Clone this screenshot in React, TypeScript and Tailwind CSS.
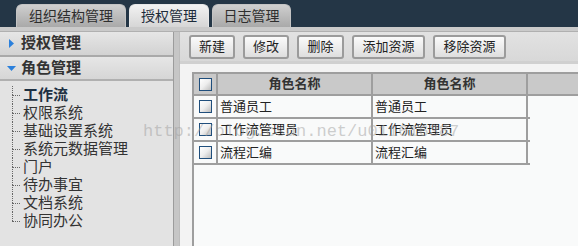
const tree = ["工作流", "权限系统", "基础设置系统", "系统元数据管理", "门户", "待办事宜", "文档系统", "协同办公"];
const buttons = [
  { label: "新建", w: "w-[46px]" },
  { label: "修改", w: "w-[46px]" },
  { label: "删除", w: "w-[47px]" },
  { label: "添加资源", w: "w-[73px]" },
  { label: "移除资源", w: "w-[73px]" },
];
const rows = [
  ["普通员工", "普通员工"],
  ["工作流管理员", "工作流管理员"],
  ["流程汇编", "流程汇编"],
];

function Check() {
  return (
    <span className="block w-[13px] h-[13px] border border-[#1f4e7c] bg-gradient-to-br from-white via-[#eeeeee] to-[#bdbdbd]" />
  );
}

function Tab(props: { label: string; active?: boolean; w: string }) {
  return (
    <div
      className={
        props.w +
        " h-[23px] rounded-t-[6px] flex items-center justify-center text-[14px] border border-b-0 " +
        (props.active
          ? "bg-gradient-to-b from-[#f2f2f2] to-[#d6d6d6] border-[#e8e8e8] text-[#1c2b3a]"
          : "bg-gradient-to-b from-[#cfcfcf] to-[#a9a9a9] border-[#c4c4c4] text-[#2e2e2e]")
      }
    >
      {props.label}
    </div>
  );
}

export default function App() {
  return (
    <div className="w-[578px] h-[246px] overflow-hidden relative bg-[#e4e4e4] font-['Liberation_Sans','Noto_Sans_CJK_SC',sans-serif] text-[#333]">
      {/* tabs bar */}
      <div className="h-[27px] bg-[#243646] flex items-end pl-[16px] gap-[3px]">
        <Tab label="组织结构管理" w="w-[110px]" />
        <Tab label="授权管理" w="w-[80px]" active />
        <Tab label="日志管理" w="w-[79px]" />
      </div>
      <div className="h-[5px] bg-[#cacaca] border-b border-[#b0b0b0]" />

      <div className="flex h-[214px]">
        {/* left menu */}
        <div className="w-[174px] bg-[#e3e3e3] border-r border-[#9c9c9c] flex flex-col">
          <div className="h-[25px] flex items-center gap-[7px] pl-[9px] bg-gradient-to-b from-[#e6e6e6] to-[#d2d2d2] border-b-2 border-[#a9a9a9]">
            <svg width="5" height="9" viewBox="0 0 5 9">
              <path d="M0 0 L5 4.5 L0 9 Z" fill="#2b80dc" />
            </svg>
            <span className="text-[15px] font-bold text-[#333]">授权管理</span>
          </div>
          <div className="h-[24px] flex items-center gap-[5px] pl-[7px] bg-gradient-to-b from-[#e6e6e6] to-[#d6d6d6] border-b-2 border-[#b0b0b0]">
            <svg width="9" height="5" viewBox="0 0 9 5">
              <path d="M0 0 L9 0 L4.5 5 Z" fill="#2b80dc" />
            </svg>
            <span className="text-[15px] font-bold text-[#333]">角色管理</span>
          </div>
          <div className="pl-[12px] pt-[5px] flex flex-col">
            {tree.map((t, i) => (
              <div key={t} className="flex h-[18px]">
                <div className="w-[8px] flex flex-col">
                  <div className="flex-1 border-l border-dotted border-[#666]" />
                  <div
                    className={
                      "flex-1 border-t border-dotted border-[#666] " +
                      (i < tree.length - 1 ? "border-l" : "")
                    }
                  />
                </div>
                <span
                  className={
                    "pl-[3px] text-[15px] leading-[18px] whitespace-nowrap " +
                    (i === 0 ? "font-bold text-[#1d3042]" : "text-[#333]")
                  }
                >
                  {t}
                </span>
              </div>
            ))}
          </div>
        </div>
        <div className="w-[6px] bg-[#c6c6c6] border-r border-[#bdbdbd]" />

        {/* right content */}
        <div className="flex-1 flex flex-col bg-[#efefef]">
          <div className="h-[32px] bg-gradient-to-b from-[#e2e2e2] to-[#d8d8d8] flex items-center gap-[8px] pl-[9px] border-b-[3px] border-[#d0d0d0]">
            {buttons.map((b) => (
              <div
                key={b.label}
                className={
                  b.w +
                  " h-[24px] rounded-[3px] border-2 border-[#9b9b9b] bg-gradient-to-b from-[#fbfbfb] to-[#dedede] flex items-center justify-center text-[13px] text-[#222]"
                }
              >
                {b.label}
              </div>
            ))}
          </div>
          <div className="flex-1 pl-[12px] pt-[8px] bg-[#f3f3f3]">
            <div className="h-full border-l-2 border-t-2 border-[#9e9e9e] bg-[#f9fafa]">
              <div className="flex h-[22px] bg-[#c9c9c9] border-b-2 border-[#9e9e9e] text-[13px] font-bold text-[#333]">
                <div className="w-[24px] border-r-2 border-[#9e9e9e] flex items-center justify-center">
                  <Check />
                </div>
                <div className="w-[155px] border-r-2 border-[#9e9e9e] flex items-center justify-center">角色名称</div>
                <div className="w-[155px] border-r-2 border-[#9e9e9e] flex items-center justify-center">角色名称</div>
                <div className="flex-1" />
              </div>
              {rows.map((r) => (
                <div key={r[0]} className="flex h-[23px] w-[336px] border-b-2 border-[#9e9e9e] text-[13px] text-[#222]">
                  <div className="w-[24px] border-r-2 border-[#9e9e9e] flex items-center justify-center">
                    <Check />
                  </div>
                  <div className="w-[155px] border-r-2 border-[#9e9e9e] flex items-center pl-[2px]">{r[0]}</div>
                  <div className="w-[155px] border-r-2 border-[#9e9e9e] flex items-center pl-[2px]">{r[1]}</div>
                </div>
              ))}
            </div>
          </div>
        </div>
      </div>

      {/* watermark */}
      <div className="absolute left-[143px] top-[119px] text-[17px] font-['Liberation_Mono',monospace] text-[#a0a0a0]/50 whitespace-nowrap pointer-events-none">
        http://blog.csdn.net/u011616387
      </div>
    </div>
  );
}
